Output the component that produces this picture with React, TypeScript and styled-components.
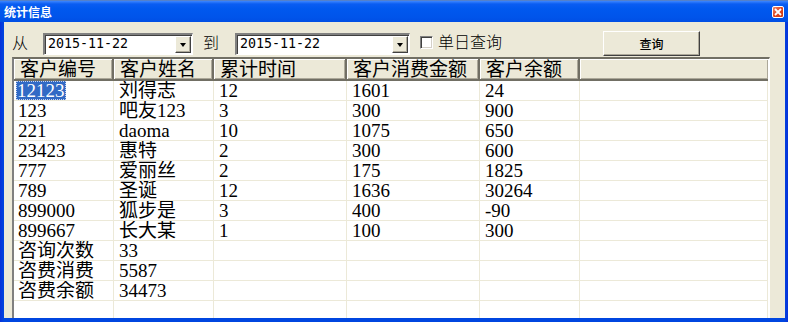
import styled, { createGlobalStyle } from "styled-components";

const GlobalStyle = createGlobalStyle`
    html, body {
        margin: 0;
        padding: 0;
        background: #ece9d8;
    }
`;

const rows = [
    ["12123", "刘得志", "12", "1601", "24"],
    ["123", "吧友123", "3", "300", "900"],
    ["221", "daoma", "10", "1075", "650"],
    ["23423", "惠特", "2", "300", "600"],
    ["777", "爱丽丝", "2", "175", "1825"],
    ["789", "圣诞", "12", "1636", "30264"],
    ["899000", "狐步是", "3", "400", "-90"],
    ["899667", "长大某", "1", "100", "300"],
    ["咨询次数", "33", "", "", ""],
    ["咨费消费", "5587", "", "", ""],
    ["咨费余额", "34473", "", "", ""],
    ["", "", "", "", ""],
];

const headers = ["客户编号", "客户姓名", "累计时间", "客户消费金额", "客户余额", ""];
const widths = [100, 100, 133, 133, 100, 188];

const App = () => {
    return (
        <>
            <GlobalStyle />
            <Window>
                <TitleBar>
                    <Title>统计信息</Title>
                    <CloseButton>
                        <svg width="8" height="8" viewBox="0 0 8 8">
                            <path d="M1 1 L7 7 M7 1 L1 7" stroke="#fff" strokeWidth="1.8" />
                        </svg>
                    </CloseButton>
                </TitleBar>
                <Body>
                    <Toolbar>
                        <Label $ml={0}>从</Label>
                        <Combo $ml={15} $w={150}>
                            <ComboText>2015-11-22</ComboText>
                            <DropButton>
                                <Arrow />
                            </DropButton>
                        </Combo>
                        <Label $ml={10}>到</Label>
                        <Combo $ml={16} $w={175}>
                            <ComboText>2015-11-22</ComboText>
                            <DropButton>
                                <Arrow />
                            </DropButton>
                        </Combo>
                        <CheckLabel>
                            <CheckBox />
                            单日查询
                        </CheckLabel>
                        <QueryButton>查询</QueryButton>
                    </Toolbar>
                    <Grid>
                        <table>
                            <colgroup>
                                {widths.map((w, i) => (
                                    <col key={i} style={{ width: w }} />
                                ))}
                            </colgroup>
                            <thead>
                                <tr>
                                    {headers.map((h, i) => (
                                        <HeadCell key={i}>{h}</HeadCell>
                                    ))}
                                </tr>
                            </thead>
                            <tbody>
                                {rows.map((r, i) => (
                                    <tr key={i}>
                                        {r.map((c, j) => (
                                            <Cell key={j} $first={j === 0}>
                                                {i === 0 && j === 0 ? <Selected>{c}</Selected> : c}
                                            </Cell>
                                        ))}
                                        <Cell />
                                    </tr>
                                ))}
                            </tbody>
                        </table>
                    </Grid>
                </Body>
            </Window>
        </>
    );
};

const Window = styled.div`
    width: 788px;
    height: 322px;
    display: flex;
    flex-direction: column;
    background: linear-gradient(to right, #0831d9, #0046e0 4px, #0046e0 calc(100% - 4px), #0831d9);
    overflow: hidden;
`;

const TitleBar = styled.div`
    height: 22px;
    flex: none;
    display: flex;
    align-items: center;
    justify-content: space-between;
    padding: 0 4px 0 4px;
    background: linear-gradient(#6b7c95 0, #3c86ff 1px, #0a5df2 4px, #0058ee 40%, #0054ea 80%, #004ee4 100%);
`;

const Title = styled.span`
    color: #ffffff;
    font-family: "Noto Sans CJK SC", sans-serif;
    font-weight: bold;
    font-size: 12px;
    line-height: 12px;
    margin-top: 2px;
`;

const CloseButton = styled.div`
    width: 12px;
    height: 12px;
    margin-top: 2px;
    display: flex;
    align-items: center;
    justify-content: center;
    box-sizing: border-box;
    border: 1px solid #ffffff;
    border-radius: 2px;
    background: linear-gradient(135deg, #f08a6a, #e0441c 50%, #c83c16);
`;

const Body = styled.div`
    flex: 1;
    min-height: 0;
    margin: 0 3px 4px 4px;
    background: #ece9d8;
    padding: 9px 0 0 8px;
    overflow: hidden;
    display: flex;
    flex-direction: column;
`;

const Toolbar = styled.div`
    height: 25px;
    flex: none;
    display: flex;
    align-items: center;
    color: #000;
`;

const Label = styled.span<{ $ml: number }>`
    margin-left: ${(p) => p.$ml}px;
    width: 16px;
    font-family: "Noto Sans CJK SC", sans-serif;
    font-weight: 300;
    font-size: 16px;
    line-height: 16px;
    margin-top: -4px;
`;

const Combo = styled.div<{ $ml: number; $w: number }>`
    margin-left: ${(p) => p.$ml}px;
    width: ${(p) => p.$w}px;
    height: 22px;
    box-sizing: border-box;
    background: #fff;
    border-style: solid;
    border-width: 2px 1px 1px 2px;
    border-color: #808080 #ffffff #ffffff #808080;
    box-shadow: inset 1px 1px 0 #404040;
    display: flex;
    align-items: center;
    justify-content: space-between;
`;

const ComboText = styled.span`
    padding-left: 3px;
    font-family: "DejaVu Sans Mono", monospace;
    font-size: 13.3px;
    line-height: 18px;
`;

const DropButton = styled.div`
    width: 16px;
    height: 17px;
    margin-right: 1px;
    box-sizing: border-box;
    background: #ece9d8;
    border-style: solid;
    border-width: 1px;
    border-color: #ffffff #404040 #404040 #ffffff;
    box-shadow: inset -1px -1px 0 #aca899;
    display: flex;
    align-items: center;
    justify-content: center;
`;

const Arrow = styled.div`
    width: 0;
    height: 0;
    margin-top: 2px;
    border-left: 3.5px solid transparent;
    border-right: 3.5px solid transparent;
    border-top: 4px solid #000;
`;

const CheckLabel = styled.label`
    margin-left: 10px;
    display: flex;
    align-items: center;
    gap: 5px;
    font-family: "Noto Sans CJK SC", sans-serif;
    font-weight: 300;
    font-size: 16px;
    line-height: 16px;
    margin-top: -6px;
`;

const CheckBox = styled.span`
    width: 13px;
    height: 13px;
    box-sizing: border-box;
    background: #fff;
    border-style: solid;
    border-width: 1px;
    border-color: #808080 #ffffff #ffffff #808080;
    box-shadow: inset 1px 1px 0 #404040, inset -1px -1px 0 #d4d0c8;
    margin-top: 3px;
`;

const QueryButton = styled.div`
    margin-left: 101px;
    width: 97px;
    height: 25px;
    box-sizing: border-box;
    background: #ece9d8;
    border-style: solid;
    border-width: 1px;
    border-color: #ffffff #404040 #404040 #ffffff;
    box-shadow: inset -1px -1px 0 #aca899;
    display: flex;
    align-items: center;
    justify-content: center;
    font-family: "Noto Sans CJK SC", sans-serif;
    font-size: 12px;
    font-weight: 500;
    margin-top: -1px;
`;

const Grid = styled.div`
    margin-top: 1px;
    width: 758px;
    flex: 1;
    box-sizing: border-box;
    border-style: solid;
    border-width: 2px 1px 0 2px;
    border-color: #716f64 #ffffff #ffffff #808080;
    background: #fff;
    overflow: hidden;

    table {
        table-layout: fixed;
        border-collapse: separate;
        border-spacing: 0;
        width: 754px;
    }
`;

const HeadCell = styled.th`
    height: 22px;
    padding: 0 0 0 6px;
    box-sizing: border-box;
    background: #ece9d8;
    text-align: left;
    font-weight: normal;
    font-family: "Liberation Serif", "Noto Sans CJK SC", serif;
    font-size: 19px;
    line-height: 19px;
    color: #000;
    white-space: nowrap;
    overflow: hidden;
    border-right: 2px solid #716f64;
    border-bottom: 2px solid #716f64;
    box-shadow: inset 1px 1px 0 #ffffff, inset -1px -1px 0 #aca899;

    &:last-child {
        border-right: none;
    }
`;

const Cell = styled.td<{ $first?: boolean }>`
    height: 20px;
    padding: 0 0 0 ${(p) => (p.$first ? 4 : 5)}px;
    box-sizing: border-box;
    font-family: "Liberation Serif", "Noto Sans CJK SC", serif;
    font-size: 19px;
    line-height: 19px;
    color: #000;
    white-space: nowrap;
    overflow: hidden;
    border-right: 1px solid #ece9d8;
    border-bottom: 1px solid #ece9d8;
`;

const Selected = styled.span`
    display: inline-block;
    background: #316ac5;
    color: #fff;
    outline: 1px dotted #c8d4ee;
    outline-offset: -1px;
    padding: 0 1px 0 1px;
    margin-left: -2px;
`;

export default App;
